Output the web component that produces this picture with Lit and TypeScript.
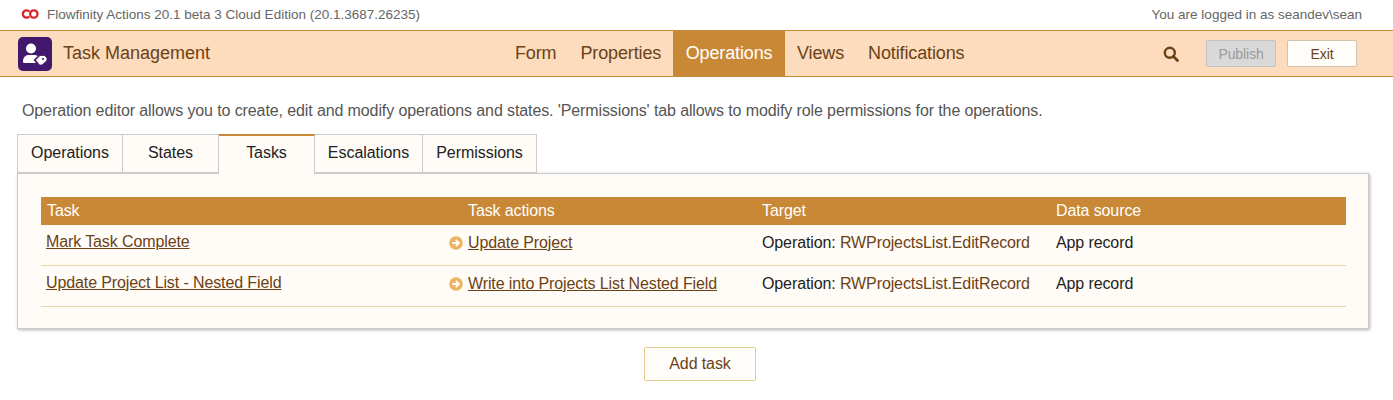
import { LitElement, html, css } from "lit";
import { customElement } from "lit/decorators.js";

const arrow = html`<svg class="arrow" viewBox="0 0 14 14" width="14" height="14"><circle cx="7" cy="7" r="6.800" fill="#e9b463"/><path d="M3.200 7h6.300M6.800 3.800 10 7 6.800 10.200" fill="none" stroke="#fffbf5" stroke-width="1.800"/></svg>`;

@customElement("app-root")
export class AppRoot extends LitElement {
  static styles = css`
    :host { display: block; font-family: "Liberation Sans", Arial, sans-serif; color: #555; background: #fff; height: 400px; overflow: hidden; }
    .top { height: 30px; box-sizing: border-box; display: flex; align-items: center; padding: 0 31px 2px 21px; font-size: 13.500px; color: #666; }
    .logo { margin-right: 8px; display: block; }
    .spacer { flex: 1; }
    .bar { height: 47px; box-sizing: border-box; background: #fcdcbc; border-top: 1px solid #c98835; border-bottom: 1px solid #c98835; display: grid; grid-template-columns: 503px auto 1fr; align-items: stretch; }
    .brand { display: flex; align-items: center; padding-left: 18px; gap: 11px; font-size: 18px; color: #6b4216; }
    .appicon { width: 34px; height: 34px; background: #42186c; border-radius: 5px; display: block; margin-top: 1px; }
    nav { display: flex; font-size: 18px; color: #6b4216; letter-spacing: -0.130px; }
    nav a { display: flex; align-items: center; padding: 0 12px; }
    nav a.on { background: #c98835; color: #fff; padding: 0 12.500px; }
    .actions { display: flex; align-items: center; justify-content: flex-end; padding-right: 36px; }
    .search { margin-right: 27px; display: block; }
    .btn { width: 70px; height: 27px; box-sizing: border-box; display: flex; align-items: center; justify-content: center; font-size: 14px; letter-spacing: -0.100px; border-radius: 2px; }
    .pub { background: #d9d9d9; border: 1px solid #c2c2c2; color: #999; margin-right: 11px; }
    .exit { background: #fffdfa; border: 1px solid #d2c3b0; color: #6b4216; }
    .intro { margin: 0; padding: 25px 0 0 22px; font-size: 16px; line-height: 18px; color: #555; letter-spacing: -0.110px; }
    .tabs { display: flex; margin: 14px 0 0 17px; height: 39px; position: relative; z-index: 1; letter-spacing: -0.050px; }
    .tab { box-sizing: border-box; height: 39px; border: 1px solid #ccc; border-left: 0; background: #fffbf6; color: #222; font-size: 16px; display: flex; align-items: center; justify-content: center; padding-bottom: 1px; }
    .tab:first-child { border-left: 1px solid #ccc; }
    .tab.on { border-top: 2px solid #c98835; border-bottom: 0; height: 40px; padding-bottom: 4px; }
    .panel { margin: 0 24px 0 17px; height: 156px; box-sizing: border-box; background: #fffbf6; border: 1px solid #ccc; box-shadow: 1px 1px 3px rgba(0,0,0,.3); padding: 23px 22px 0 23px; letter-spacing: -0.110px; }
    .row { display: grid; grid-template-columns: 405px 22px 294px 294px 1fr; align-items: center; }
    .head { height: 28px; box-sizing: border-box; background: #c98835; color: #fff; font-size: 16px; }
    .head span:first-child { padding-left: 6px; }
    .item { height: 41px; box-sizing: border-box; padding-bottom: 5px; border-bottom: 1px solid #e8d5a5; font-size: 16px; color: #222; }
    .item a { color: #6b4216; text-decoration: underline; }
    .name { padding-left: 5px; margin-top: -1px; }
    .arrowcell { display: flex; padding-left: 3px; }
    .arrow { display: block; }
    .op b { font-weight: normal; color: #6b4216; }
    .footer { display: flex; justify-content: center; margin-top: 18px; padding-left: 7px; }
    .add { width: 112px; height: 34px; box-sizing: border-box; border: 1px solid #e5cc8c; border-radius: 2px; background: #fffdfa; color: #6b4216; font-size: 16px; letter-spacing: -0.110px; display: flex; align-items: center; justify-content: center; }
  `;

  render() {
    const tabs: [string, number, boolean][] = [["Operations", 106, false], ["States", 96, false], ["Tasks", 96, true], ["Escalations", 108, false], ["Permissions", 114, false]];
    const rows = [
      ["Mark Task Complete", "Update Project"],
      ["Update Project List - Nested Field", "Write into Projects List Nested Field"],
    ];
    return html`
      <div class="top">
        <svg class="logo" width="18" height="10" viewBox="0 0 18 10">
          <path d="M8.300 2.500A3.700 3.700 0 1 0 8.300 7.500" fill="none" stroke="#d9262c" stroke-width="2.300"/>
          <circle cx="12.800" cy="5" r="3.700" fill="none" stroke="#d9262c" stroke-width="2.300"/>
        </svg>
        <span>Flowfinity Actions 20.1 beta 3 Cloud Edition (20.1.3687.26235)</span>
        <span class="spacer"></span>
        <span>You are logged in as seandev\\sean</span>
      </div>
      <div class="bar">
        <div class="brand">
          <svg class="appicon" viewBox="0 0 34 34" width="34" height="34">
            <circle cx="13" cy="11.500" r="5" fill="#fff"/>
            <path d="M5 24.500c0-4 2.500-6.500 5.500-6.500h6c1.200 0 2.300.3 3.200.9L15.500 23l2.500 3H6.500C5.500 26 5 25.500 5 24.500z" fill="#fff"/>
            <path d="M17.500 23 22 18.500h4.500L29 21v2.500L24 28h-2.500z" fill="#fff" stroke="#42186c" stroke-width=".8"/>
            <circle cx="25" cy="22" r="1.100" fill="#42186c"/>
          </svg>
          <span>Task Management</span>
        </div>
        <nav>
          <a>Form</a><a>Properties</a><a class="on">Operations</a><a>Views</a><a>Notifications</a>
        </nav>
        <div class="actions">
          <svg class="search" width="16" height="16" viewBox="0 0 16 16"><circle cx="6.800" cy="6.800" r="5" fill="none" stroke="#6b4216" stroke-width="2.400"/><path d="M10.500 10.500 14.500 14.500" stroke="#6b4216" stroke-width="2.800" stroke-linecap="round"/></svg>
          <div class="btn pub">Publish</div>
          <div class="btn exit">Exit</div>
        </div>
      </div>
      <p class="intro">Operation editor allows you to create, edit and modify operations and states. 'Permissions' tab allows to modify role permissions for the operations.</p>
      <div class="tabs">
        ${tabs.map(([t, w, on]) => html`<div class="tab ${on ? "on" : ""}" style="width:${w}px">${t}</div>`)}
      </div>
      <div class="panel">
        <div class="row head"><span>Task</span><span></span><span>Task actions</span><span>Target</span><span>Data source</span></div>
        ${rows.map(([a, b]) => html`
          <div class="row item">
            <a class="name">${a}</a>
            <span class="arrowcell">${arrow}</span>
            <a>${b}</a>
            <span class="op">Operation: <b>RWProjectsList.EditRecord</b></span>
            <span>App record</span>
          </div>`)}
      </div>
      <div class="footer"><div class="add">Add task</div></div>
    `;
  }
}
